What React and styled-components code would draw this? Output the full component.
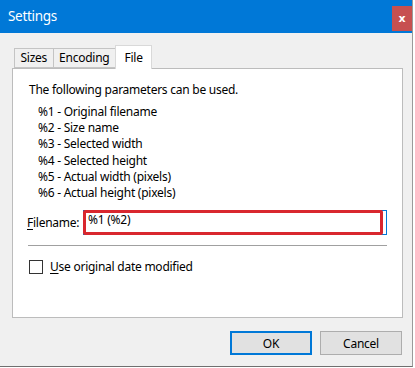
import React from "react"
import styled, { createGlobalStyle } from "styled-components"

const GlobalStyle = createGlobalStyle`
  html, body {
    margin: 0;
    padding: 0;
    background: #ffffff;
  }
  body {
    font-family: "Noto Sans", "Open Sans", sans-serif;
    font-size: 12px;
    letter-spacing: -0.25px;
    color: #000;
  }
`

const Window = styled.div`
  width: 412px;
  height: 366px;
  background: #f0f0f0;
  border-right: 1px solid #9a9a9a;
  border-bottom: 1px solid #6f6f6f;
  display: flex;
  flex-direction: column;
`

const TitleBar = styled.div`
  height: 33px;
  background: #0078d7;
  display: flex;
  align-items: flex-start;
  padding-left: 8px;
  color: #fff;
  flex-shrink: 0;
`

const Title = styled.div`
  font-size: 13.5px;
  letter-spacing: -0.3px;
  line-height: 33px;
`

const CloseButton = styled.div`
  margin-left: auto;
  margin-top: 6px;
  width: 20px;
  height: 25px;
  background: #c75050;
  color: #fff;
  font-family: "DejaVu Sans", sans-serif;
  font-weight: bold;
  font-size: 11px;
  display: flex;
  align-items: center;
  justify-content: center;
`

const Body = styled.div`
  flex: 1;
  padding: 12px 10px 0 12px;
  display: flex;
  flex-direction: column;
`

const TabStrip = styled.div`
  display: flex;
  align-items: flex-end;
  padding-left: 2px;
  height: 23px;
  position: relative;
  z-index: 1;
`

const Tab = styled.div`
  box-sizing: border-box;
  height: ${p => (p.$active ? "24px" : "20px")};
  margin-bottom: ${p => (p.$active ? "-1px" : "0")};
  margin-left: -1px;
  padding: ${p => (p.$active ? "0 8.5px" : "0 5.5px")};
  border: 1px solid ${p => (p.$active ? "#d9d9d9" : "#c4c4c4")};
  border-bottom: ${p => (p.$active ? "none" : "1px solid #c4c4c4")};
  background: ${p => (p.$active ? "#ffffff" : "#f0f0f0")};
  display: flex;
  align-items: center;
  line-height: 1;
  &:first-child {
    margin-left: 0;
  }
`

const Panel = styled.div`
  box-sizing: border-box;
  width: 391px;
  height: 250px;
  background: #ffffff;
  border: 1px solid #bcbcbc;
  padding: 13px 0 0 16px;
`

const Intro = styled.div`
  line-height: 16px;
`

const ParamList = styled.div`
  margin: 6px 0 0 9px;
  display: flex;
  flex-direction: column;
`

const Param = styled.div`
  line-height: 16.2px;
`

const FieldRow = styled.div`
  display: grid;
  grid-template-columns: 56px 304px;
  align-items: center;
  margin-top: 9px;
  margin-left: -2px;
`

const Accel = styled.span`
  text-decoration: underline;
  text-underline-offset: 2px;
`

const InputBox = styled.div`
  position: relative;
  box-sizing: border-box;
  height: 25px;
  border: 1px solid #0078d7;
  padding: 1px 0 0 4px;
  line-height: 16px;
`

const Highlight = styled.div`
  position: absolute;
  left: -1px;
  top: -1px;
  right: 3px;
  bottom: -1px;
  border: 3px solid #d9272e;
  border-radius: 2px;
`

const Separator = styled.div`
  width: 359px;
  height: 1px;
  background: #a0a0a0;
  margin: 10px 0 0 -1px;
`

const CheckRow = styled.div`
  display: flex;
  align-items: center;
  gap: 7px;
  margin-top: 12px;
`

const CheckBox = styled.div`
  box-sizing: border-box;
  width: 14px;
  height: 14px;
  border: 1px solid #333333;
  background: #fff;
`

const Footer = styled.div`
  display: flex;
  justify-content: flex-end;
  gap: 8px;
  padding-top: 13px;
`

const Button = styled.button`
  box-sizing: border-box;
  width: 82px;
  height: 24px;
  font: inherit;
  letter-spacing: inherit;
  color: #000;
  background: #e1e1e1;
  border: 1px solid ${p => (p.$default ? "#0078d7" : "#adadad")};
  box-shadow: ${p => (p.$default ? "inset 0 0 0 1px #0078d7" : "none")};
  padding: 0;
`

export default function App() {
  const params = [
    "%1 - Original filename",
    "%2 - Size name",
    "%3 - Selected width",
    "%4 - Selected height",
    "%5 - Actual width (pixels)",
    "%6 - Actual height (pixels)",
  ]
  return (
    <>
      <GlobalStyle />
      <Window>
        <TitleBar>
          <Title>Settings</Title>
          <CloseButton>x</CloseButton>
        </TitleBar>
        <Body>
          <TabStrip>
            <Tab>Sizes</Tab>
            <Tab>Encoding</Tab>
            <Tab $active>File</Tab>
          </TabStrip>
          <Panel>
            <Intro>The following parameters can be used.</Intro>
            <ParamList>
              {params.map(p => (
                <Param key={p}>{p}</Param>
              ))}
            </ParamList>
            <FieldRow>
              <span>
                <Accel>F</Accel>ilename:
              </span>
              <InputBox>
                %1 (%2)
                <Highlight />
              </InputBox>
            </FieldRow>
            <Separator />
            <CheckRow>
              <CheckBox />
              <span>
                <Accel>U</Accel>se original date modified
              </span>
            </CheckRow>
          </Panel>
          <Footer>
            <Button $default>OK</Button>
            <Button>Cancel</Button>
          </Footer>
        </Body>
      </Window>
    </>
  )
}
